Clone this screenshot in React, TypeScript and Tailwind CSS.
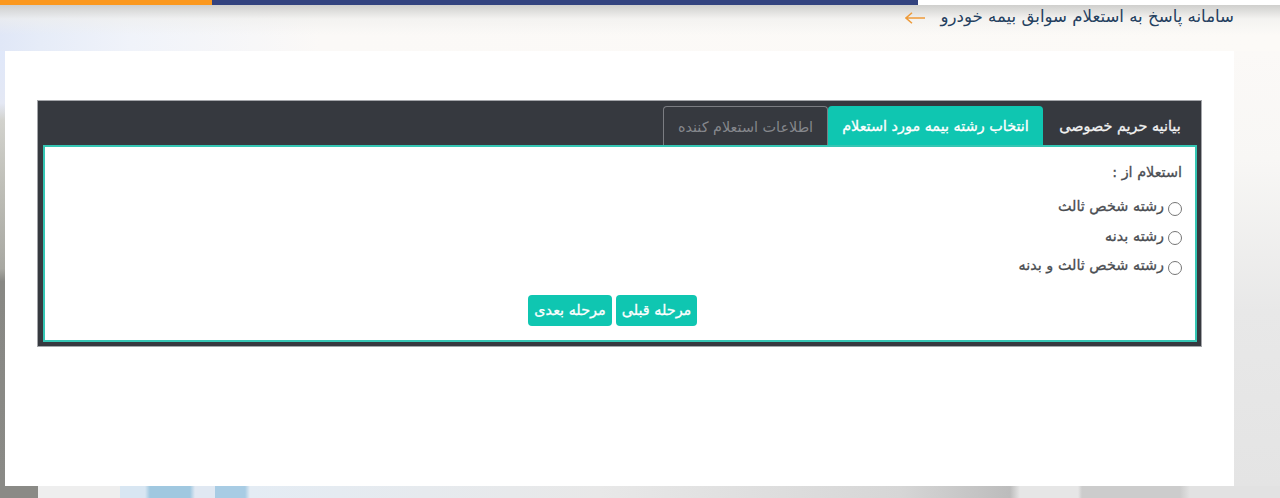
import React, { useState } from 'react';

const options = ['رشته شخص ثالث', 'رشته بدنه', 'رشته شخص ثالث و بدنه'];

export default function App() {
  const [picked, setPicked] = useState<number | null>(null);

  return (
    <div dir="rtl" className="h-[498px] w-full overflow-hidden flex flex-col font-['DejaVu_Sans',sans-serif] bg-white">
      {/* top strip */}
      <div dir="ltr" className="flex h-[5px] shrink-0">
        <div className="w-[212px] bg-[#fb981e]" />
        <div className="w-[706px] bg-[#33437f]" />
        <div className="flex-1 bg-white" />
      </div>

      {/* page title */}
      <div className="h-[46px] shrink-0 pr-[46px] flex items-start gap-[16px] bg-[linear-gradient(180deg,#cfcfcd_0%,rgba(238,238,236,0.6)_30%,rgba(250,250,250,0)_65%),linear-gradient(90deg,#e0e7f7_0,#e6ecf8_40px,#f0f3fa_130px,#fbf9f7_320px,#fcfaf7_100%)]">
        <span className="mt-[1px] text-[16.6px] leading-[22px] text-[#24405f] whitespace-nowrap">سامانه پاسخ به استعلام سوابق بیمه خودرو</span>
        <svg width="20" height="12" viewBox="0 0 20 12" fill="none" stroke="#ee9b3a" strokeWidth="1.5" className="mt-[7px]">
          <path d="M20 6H1M7 0.8L1 6l6 5.2" />
        </svg>
      </div>

      <div dir="ltr" className="flex h-[435px] shrink-0">
        <div className="w-[5px] bg-[linear-gradient(180deg,#e0e8fa_0%,#e4e8f4_12%,#d2d2cd_16%,#c0c0b9_30%,#a8a8a2_50%,#888884_53%,#8a8a86_100%)]" />

        {/* card */}
        <div className="w-[1229px] bg-white pt-[49px] pl-[32px]">
          <div dir="rtl" className="w-[1165px] h-[247px] bg-[#36393f] border border-[#a4a6aa] pt-[5px] pl-[5px] pr-[4px] pb-[4px] flex flex-col">
            <div className="flex h-[39px] shrink-0 text-[14.4px] [-webkit-text-stroke:0.3px]">
              <div className="w-[154px] pt-[3px] flex items-center justify-center text-[#f2f2f2] whitespace-nowrap">بیانیه حریم خصوصی</div>
              <div className="w-[215px] pt-[3px] flex items-center justify-center rounded-t-[4px] bg-[#0fc6b1] text-white whitespace-nowrap">انتخاب رشته بیمه مورد استعلام</div>
              <div className="w-[165px] pt-[3px] flex items-center justify-center rounded-t-[4px] border border-b-0 border-[#7b7d82] text-[#85878c] [-webkit-text-stroke:0px] whitespace-nowrap">اطلاعات استعلام کننده</div>
            </div>

            <div className="flex-1 bg-white border-2 border-[#35c6b4] pr-[13px] pt-[15px]">
              <div className="text-[14.4px] leading-[20px] text-[#4a4d52] [-webkit-text-stroke:0.3px]">استعلام از :</div>

              <div className="mt-[15px] flex flex-col gap-[9.5px]">
                {options.map((label, i) => (
                  <label key={label} className="flex items-center h-[20px] gap-[4px] text-[14.4px] text-[#4a4d52] [-webkit-text-stroke:0.3px]">
                    <input
                      type="radio"
                      name="field"
                      checked={picked === i}
                      onChange={() => setPicked(i)}
                      className="w-[14px] h-[14px] m-0 mt-[3px]"
                    />
                    <span>{label}</span>
                  </label>
                ))}
              </div>

              <div className="mt-[19px] mr-[2px] flex justify-center gap-[4px]">
                <button className="w-[81px] h-[31px] rounded-[4px] bg-[#0fc6b1] text-white text-[14.4px] [-webkit-text-stroke:0.3px] whitespace-nowrap">مرحله قبلی</button>
                <button className="w-[84px] h-[31px] rounded-[4px] bg-[#0fc6b1] text-white text-[14.4px] [-webkit-text-stroke:0.3px] whitespace-nowrap">مرحله بعدی</button>
              </div>
            </div>
          </div>
        </div>

        <div className="flex-1 bg-[linear-gradient(180deg,#fbf9f7_0%,#f8f7f5_25%,#e8e8e8_60%,#e4e4e4_100%)]" />
      </div>

      {/* photo showing below the card */}
      <div className="flex-1 bg-[linear-gradient(90deg,#8a8a86_0,#8a8a86_38px,#eeeeee_38px,#eeeeee_120px,#d8e6f2_120px,#d8e6f2_145px,#a0c8e0_150px,#a0c8e0_190px,#e0e8f2_195px,#e0e8f2_215px,#a8cce4_215px,#a8cce4_245px,#e4ecf4_250px,#e8e8e8_600px,#d6d6d6_900px,#bcbcbc_1010px,#e6e6e6_1020px,#e6e6e6_1078px,#cccccc_1082px,#cccccc_1180px,#e2e2e2_1190px,#e2e2e2_100%)]" />
    </div>
  );
}
